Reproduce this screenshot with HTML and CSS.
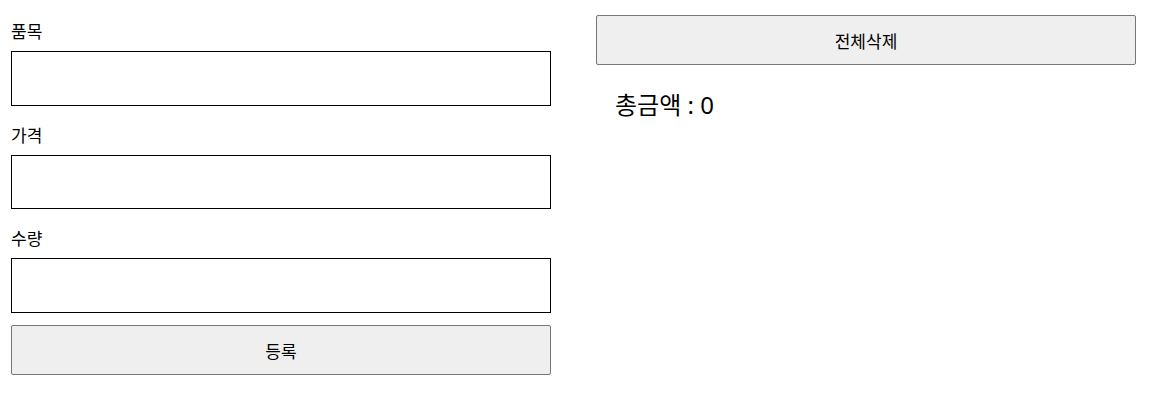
FILE: index.html
```html
<!DOCTYPE html>
<html lang="ko">
<head>
    <meta charset="UTF-8">
    <meta name="viewport" content="width=device-width, initial-scale=1.0">
    <title>장바구니</title>
    <link rel="stylesheet" href="styles.css">
</head>
<body>
    <div class="container">
        <form class="item-form" id="item-form">
            <label for="name">품목</label>
            <input type="text" id="name">
            <label for="price">가격</label>
            <input type="text" id="price">
            <label for="count">수량</label>
            <input type="text" id="count">
            <button type="submit">등록</button>
        </form>
        <div class="cart-area">
            <button type="button" id="clear-all">전체삭제</button>
            <div class="total">총금액 : <span id="total">0</span></div>
            <ul id="cart-list" class="cart-list"></ul>
        </div>
    </div>
</body>
</html>
```

FILE: styles.css
```css
body {
    font-family: "Noto Sans", "Noto Sans CJK KR", sans-serif;
    color: #000;
    background-color: #fff;
    margin: 0;
    padding: 0;
}
.container {
    display: flex;
    gap: 45px;
    padding: 15px 20px 0 11px;
}
.item-form {
    width: 540px;
    display: flex;
    flex-direction: column;
    padding-top: 5px;
}
.item-form label {
    font-size: 17px;
    line-height: 24px;
    margin-bottom: 7px;
}
.item-form input {
    height: 54.5px;
    box-sizing: border-box;
    border: 1px solid #000;
    margin: 0 0 18px;
    padding: 0 8px;
    font-size: 16px;
}
.item-form input:last-of-type {
    margin-bottom: 12.5px;
}
button {
    display: block;
    width: 100%;
    height: 50px;
    background-color: #efefef;
    color: #000;
    border: 1px solid #767676;
    border-radius: 2px;
    font-family: inherit;
    font-size: 17px;
    cursor: pointer;
}
button:hover {
    background-color: #e5e5e5;
}
.cart-area {
    width: 540px;
}
.total {
    font-size: 24px;
    line-height: 32px;
    padding: 24px 19px 0;
}
.cart-list {
    list-style: none;
    margin: 0;
    padding: 0 19px;
}
```
